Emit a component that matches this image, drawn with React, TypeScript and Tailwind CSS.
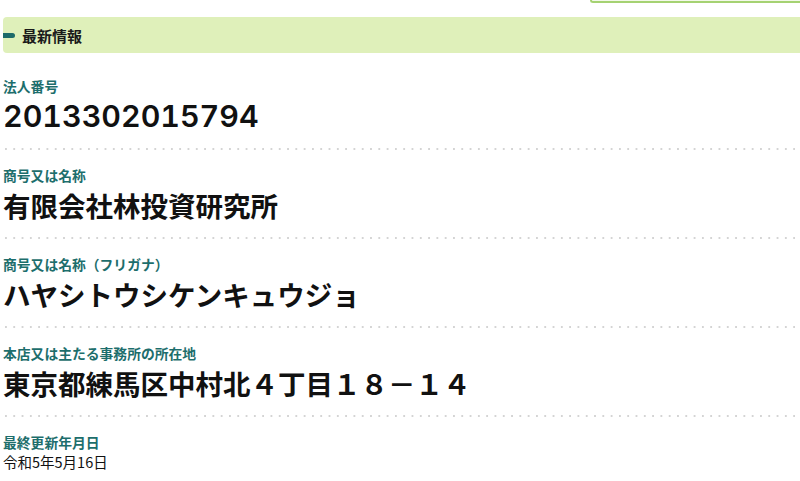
import React from "react";

const CJK = "font-['Noto_Sans_CJK_JP','Noto_Sans',sans-serif]";

function Sep() {
  return (
    <div className="h-[2px] w-full bg-[linear-gradient(to_right,#d4d4d4_2px,transparent_2px)] bg-[length:8.3px_2px] bg-repeat-x bg-[position:2px_0]" />
  );
}

function Label({ children }: { children: React.ReactNode }) {
  return (
    <div className={`${CJK} text-[13.8px] leading-[20px] font-bold text-[#1d6e6c]`}>{children}</div>
  );
}

function Value({ children, digits }: { children: React.ReactNode; digits?: boolean }) {
  if (digits) {
    return (
      <div className="font-['Inter',sans-serif] tabular-nums text-[30.4px] leading-[40px] font-semibold text-[#111]">
        {children}
      </div>
    );
  }
  return (
    <div className={`${CJK} text-[27.5px] leading-[40px] font-semibold text-[#111]`}>{children}</div>
  );
}

export default function App() {
  return (
    <div className="w-[800px] h-[481px] overflow-hidden bg-white pl-[3px]">
      <div className="flex justify-end">
        <div className="w-[210px] h-[3px] border-b-2 border-l-2 border-[#a5d272] rounded-bl-[6px] bg-[#f3f9e9]" />
      </div>
      <div className="mt-[14px] h-[36px] bg-[#dff0ba] rounded-l-[4px] flex items-center">
        <div className="w-[12px] h-[5px] bg-[#1d6b69] rounded-r-full" />
        <div className={`${CJK} ml-[7px] text-[15px] font-bold text-[#1a1a1a] leading-none`}>最新情報</div>
      </div>

      <div className="pt-[23px]">
        <Label>法人番号</Label>
        <Value digits>2013302015794</Value>
        <div className="h-[12px]" />
        <Sep />
      </div>
      <div className="pt-[15px]">
        <Label>商号又は名称</Label>
        <Value>有限会社林投資研究所</Value>
        <div className="h-[12px]" />
        <Sep />
      </div>
      <div className="pt-[15px]">
        <Label>商号又は名称（フリガナ）</Label>
        <Value>ハヤシトウシケンキュウジョ</Value>
        <div className="h-[12px]" />
        <Sep />
      </div>
      <div className="pt-[15px]">
        <Label>本店又は主たる事務所の所在地</Label>
        <Value>東京都練馬区中村北４丁目１８－１４</Value>
        <div className="h-[12px]" />
        <Sep />
      </div>
      <div className="pt-[15px]">
        <Label>最終更新年月日</Label>
        <div className={`${CJK} text-[14.5px] leading-[20px] text-[#111]`}>令和5年5月16日</div>
      </div>
    </div>
  );
}
